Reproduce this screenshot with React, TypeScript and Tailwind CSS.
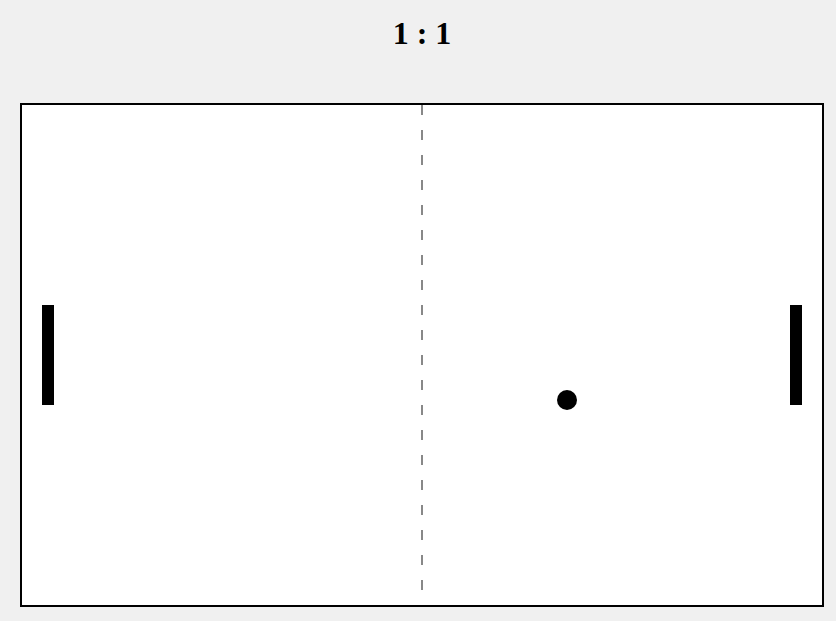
import React from "react";

export default function App() {
  return (
    <div className="w-[836px] h-[621px] bg-[#f0f0f0] pt-[15px] pl-[20px] overflow-hidden">
      <div
        className="w-[804px] text-center font-bold text-[32px] leading-[36px] text-black"
        style={{ fontFamily: '"Liberation Serif", "Times New Roman", serif' }}
      >
        1 : 1
      </div>
      <div className="mt-[52px] w-[804px] h-[504px] border-2 border-black bg-white relative">
        <svg className="absolute left-0 top-0" width="800" height="500">
          <line x1="400" y1="0" x2="400" y2="500" stroke="#888888" strokeWidth="2" strokeDasharray="10 15" />
        </svg>
        <div className="absolute left-[20px] top-[200px] w-[12px] h-[100px] bg-black" />
        <div className="absolute left-[768px] top-[200px] w-[12px] h-[100px] bg-black" />
        <div className="absolute left-[535px] top-[285px] w-[20px] h-[20px] rounded-full bg-black" />
      </div>
    </div>
  );
}
